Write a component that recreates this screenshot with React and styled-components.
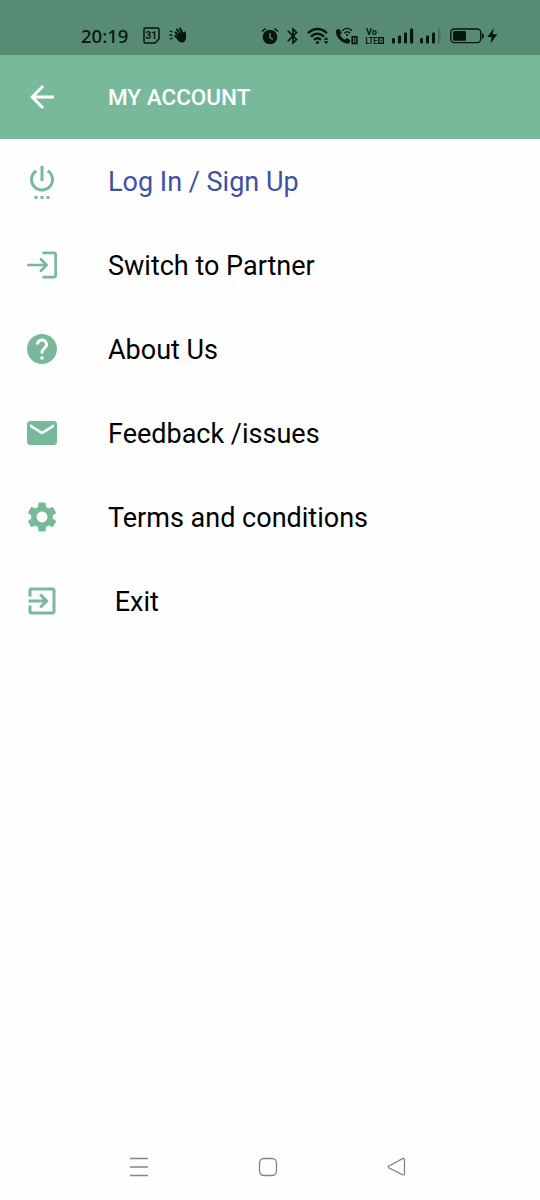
import React from 'react';
import styled, { createGlobalStyle } from 'styled-components';
import {
  MdArrowBack,
  MdBluetooth,
  MdExitToApp,
  MdHelp,
  MdMail,
  MdSettings,
  MdSettingsPower,
} from 'react-icons/md';

const SwitchIcon = () => (
  <svg
    viewBox="0 0 24 24"
    fill="none"
    stroke="currentColor"
    strokeWidth="1.800"
    strokeLinecap="round"
    strokeLinejoin="round"
  >
    <path d="M2.900 12h12M11.300 8.200l3.800 3.800-3.800 3.800" />
    <path d="M13 3.900h6.800a1.300 1.300 0 0 1 1.300 1.300v13.600a1.300 1.300 0 0 1-1.300 1.300H13" />
  </svg>
);

const items = [
  { id: 1, label: 'Log In / Sign Up', icon: MdSettingsPower, active: true },
  { id: 2, label: 'Switch to Partner', icon: SwitchIcon },
  { id: 3, label: 'About Us', icon: MdHelp },
  { id: 4, label: 'Feedback /issues', icon: MdMail },
  { id: 5, label: 'Terms and conditions', icon: MdSettings },
  { id: 6, label: ' Exit', icon: MdExitToApp },
];

const StatusIcons = () => (
  <>
    <StatusIcon width="17" height="17" $gap={14}>
      <path
        d="M2.500 1h12a1.500 1.500 0 0 1 1.500 1.500v9.500l-4 4H2.500A1.500 1.500 0 0 1 1 14.500v-12A1.500 1.500 0 0 1 2.500 1z"
        fill="none"
        stroke="#07160f"
        strokeWidth="1.500"
      />
      <text x="8.300" y="12" fontSize="10" fontWeight="700" textAnchor="middle">
        31
      </text>
    </StatusIcon>
    <StatusIcon width="18" height="17" $gap={9}>
      <g fill="none" stroke="#07160f" strokeLinecap="round">
        <path d="M1.200 4l2 .8M.8 8h2M1.200 12l2-.8" strokeWidth="1.300" />
        <path d="M6.500 5.500l4 4.500M8 2.600l4 5M11 1.600l3 5.500M6.200 9l3.500 3" strokeWidth="2" />
        <path d="M15.800 10V5.500" strokeWidth="2.200" />
      </g>
      <path d="M8 7.500l6-2.500 1.500 2 1.500-.5v4c0 3-1.700 5-4 5-2 0-3.500-1-5-3z" />
    </StatusIcon>
    <StatusIcon width="18" height="18" $gap={74}>
      <circle cx="9" cy="10" r="7.300" />
      <path d="M1 4.500l3.500-3M17 4.500l-3.500-3" stroke="#07160f" strokeWidth="1.600" />
      <path d="M9 6v4.500l2.800 1.800" fill="none" stroke="#588b74" strokeWidth="1.400" />
    </StatusIcon>
    <Bluetooth />
    <StatusIcon width="23" height="18" $gap={8}>
      <g fill="none" stroke="#07160f" strokeWidth="2.300">
        <path d="M1 6.200c5.500-5.600 13.500-5.600 19 0" />
        <path d="M4 9.600c4-3.800 9-3.800 13 0" />
        <path d="M7 12.800c2.300-2 4.700-2 7 0" />
      </g>
      <circle cx="10.500" cy="15.500" r="1.600" />
      <path d="M16.700 12.700l2.400-2.600 2.400 2.600zM16.700 14.300l2.400 2.600 2.400-2.600z" />
    </StatusIcon>
    <StatusIcon width="23" height="18" $gap={5}>
      <path d="M2 2.500l2.500-.6 2.300 4-1.700 2.200c1.100 2.300 2.600 3.700 4.700 4.600l2.200-1.600 3.300 2.200-.6 2.300c-.5 1-1.700 1.300-3 1C6 15.400 1.600 11 .9 5c-.1-1.200.1-2 1.100-2.500z" />
      <g fill="none" stroke="#07160f" strokeWidth="1.400">
        <path d="M7.300 3.800c3-3.200 6.800-3.200 9.800 0" />
        <path d="M9.300 6.200c1.900-1.900 4-1.900 5.900 0" />
      </g>
      <circle cx="12.200" cy="8" r="1.100" />
      <rect x="17.300" y="9.800" width="4.400" height="6.600" fill="none" stroke="#07160f" strokeWidth="1.800" />
      <path d="M19.100 11.500h.9v3h-.9z" />
    </StatusIcon>
    <StatusIcon width="20" height="18" $gap={7}>
      <text x="1" y="8" fontSize="9" fontWeight="700" textLength="11" lengthAdjust="spacingAndGlyphs">
        Vo
      </text>
      <text x=".5" y="16.800" fontSize="9" fontWeight="700" textLength="12" lengthAdjust="spacingAndGlyphs">
        LTE
      </text>
      <rect x="13.700" y="10.700" width="4.600" height="5.600" fill="none" stroke="#07160f" strokeWidth="1.400" />
      <path d="M15.300 12.700h1.400v1.400h-1.400z" />
    </StatusIcon>
    <StatusIcon width="22" height="18" $gap={7}>
      <rect x="0" y="11" width="3" height="5.500" rx="1" />
      <rect x="6" y="8.500" width="3" height="8" rx="1" />
      <rect x="12" y="5.500" width="3" height="11" rx="1" />
      <rect x="18" y="1.500" width="3.200" height="15" rx="1" />
    </StatusIcon>
    <StatusIcon width="21" height="18" $gap={6}>
      <rect x="0" y="11" width="3" height="5.500" rx="1" />
      <rect x="6" y="8.500" width="3" height="8" rx="1" />
      <rect x="12" y="5.500" width="3" height="11" rx="1" />
      <rect x="18" y="1.500" width="2.500" height="15" rx="1" opacity=".22" />
    </StatusIcon>
    <StatusIcon width="34" height="18" $gap={9}>
      <rect x=".8" y="2" width="30" height="13.600" rx="3.500" fill="none" stroke="#07160f" strokeWidth="1.400" />
      <rect x="3" y="4" width="13" height="9.700" rx="1.500" />
      <path d="M32 6.200h.5c1 0 1.300 1.200 1.300 2.600s-.3 2.600-1.300 2.600H32z" />
    </StatusIcon>
    <StatusIcon width="11" height="18" $gap={3}>
      <path d="M6.800 1L.3 10h4.300L3.500 16.500 10.300 7.300H5.700z" />
    </StatusIcon>
  </>
);

const App = () => {
  return (
    <Screen>
      <GlobalStyle />
      <StatusBar>
        <Time>20:19</Time>
        <StatusIcons />
      </StatusBar>
      <Header>
        <IconSlot>
          <MdArrowBack />
        </IconSlot>
        <Title>MY ACCOUNT</Title>
      </Header>
      <Menu>
        {items.map((item) => (
          <MenuItem key={item.id} $active={item.active}>
            <IconSlot>
              <item.icon />
            </IconSlot>
            <Label>{item.label}</Label>
          </MenuItem>
        ))}
      </Menu>
      <NavBar>
        <svg width="20" height="20">
          <path d="M1 1.500h18M1 10h18M1 18.500h18" />
        </svg>
        <svg width="20" height="20">
          <rect x="1.500" y="1.500" width="17" height="17" rx="4.500" />
        </svg>
        <svg width="20" height="20">
          <path d="M2 9L15.500 1.700q2-.8 2 1.200v13.600q0 2-2 1.200L2 11q-1.400-1 0-2z" />
        </svg>
      </NavBar>
    </Screen>
  );
};

const GlobalStyle = createGlobalStyle`
  * {
    box-sizing: border-box;
  }

  body {
    margin: 0;
    background: #fefefe;
    font-family: Roboto, 'Liberation Sans', sans-serif;
  }
`;

const Screen = styled.div`
  display: flex;
  flex-direction: column;
  width: 540px;
  height: 1200px;
  background: #fefefe;
`;

const StatusBar = styled.div`
  display: flex;
  align-items: flex-start;
  height: 55px;
  padding: 27px 0 0 81px;
  background: #588b74;
  color: #07160f;
`;

const Time = styled.span`
  width: 48px;
  margin-top: -1px;
  font-family: 'Noto Sans', sans-serif;
  font-size: 18.5px;
  font-weight: 500;
  line-height: 19px;
  white-space: nowrap;
`;

const StatusIcon = styled.svg`
  flex-shrink: 0;
  margin-left: ${({ $gap }) => $gap}px;
  fill: #07160f;
  font-family: Roboto, sans-serif;
`;

const Bluetooth = styled(MdBluetooth)`
  flex-shrink: 0;
  width: 20px;
  height: 20px;
  margin: -1px -4px 0 4px;
`;

const Header = styled.header`
  display: flex;
  align-items: center;
  height: 84px;
  padding-left: 24px;
  background: #78b99b;
  color: #fff;
`;

const IconSlot = styled.span`
  display: flex;
  width: 84px;

  svg {
    width: 36px;
    height: 36px;
  }
`;

const Title = styled.h1`
  margin: 0;
  font-size: 22.5px;
  font-weight: 500;
  line-height: 28px;
`;

const Label = styled.span`
  padding-top: 2px;
  color: #000;
  font-size: 27px;
  line-height: 32px;
  white-space: pre;
`;

const Menu = styled.nav`
  flex: 1;
`;

const MenuItem = styled.div`
  display: flex;
  align-items: center;
  height: 84px;
  padding-left: 24px;
  color: #78b99b;

  ${Label} {
    color: ${({ $active }) => ($active ? '#3f51a5' : '#000')};
  }
`;

const NavBar = styled.div`
  display: flex;
  justify-content: space-between;
  height: 43px;
  padding: 0 133px 0 129px;

  svg {
    fill: none;
    stroke: #858585;
    stroke-width: 1.3;
  }
`;

export default App;
